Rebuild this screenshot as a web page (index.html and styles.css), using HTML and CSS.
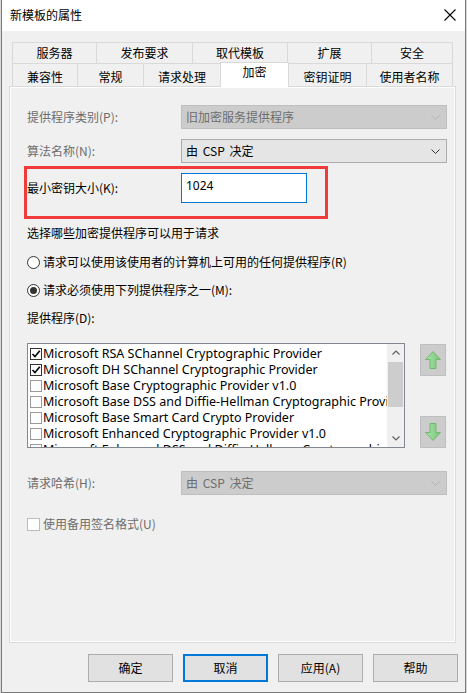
FILE: index.html
```html
<!DOCTYPE html>
<html lang="zh-CN">
<head>
<meta charset="utf-8">
<title>新模板的属性</title>
<link rel="stylesheet" href="styles.css">
</head>
<body>
<div class="window">
  <div class="titlebar">
    <span class="title">新模板的属性</span>
    <svg class="close" width="12" height="12" viewBox="0 0 12 12"><path d="M0.5 0.5 L11.5 11.5 M11.5 0.5 L0.5 11.5" stroke="#000" stroke-width="1.1" fill="none"/></svg>
  </div>
  <div class="client">
    <div class="tabs">
      <div class="tabrow r1">
        <div class="tab">服务器</div>
        <div class="tab">发布要求</div>
        <div class="tab">取代模板</div>
        <div class="tab">扩展</div>
        <div class="tab">安全</div>
      </div>
      <div class="tabrow r2">
        <div class="tab">兼容性</div>
        <div class="tab">常规</div>
        <div class="tab">请求处理</div>
        <div class="tab selected">加密</div>
        <div class="tab">密钥证明</div>
        <div class="tab">使用者名称</div>
      </div>
    </div>
    <div class="panel">
      <div class="row first">
        <span class="label disabled">提供程序类别(P):</span>
        <div class="combo disabled"><span>旧加密服务提供程序</span><svg class="chev" width="9" height="5" viewBox="0 0 9 5"><path d="M0.5 0.5 L4.5 4.5 L8.5 0.5" stroke="#b4b4b4" fill="none"/></svg></div>
      </div>
      <div class="row second">
        <span class="label disabled">算法名称(N):</span>
        <div class="combo"><span>由 CSP 决定</span><svg class="chev" width="9" height="5" viewBox="0 0 9 5"><path d="M0.5 0.5 L4.5 4.5 L8.5 0.5" stroke="#333" fill="none"/></svg></div>
      </div>
      <div class="highlight">
        <span class="label">最小密钥大小(K):</span>
        <div class="textbox">1024</div>
      </div>
      <div class="line text-choose">选择哪些加密提供程序可以用于请求</div>
      <div class="line radio-row r-any"><span class="radio"></span>请求可以使用该使用者的计算机上可用的任何提供程序(R)</div>
      <div class="line radio-row r-must"><span class="radio checked"></span>请求必须使用下列提供程序之一(M):</div>
      <div class="line text-prov">提供程序(D):</div>
      <div class="listarea">
        <div class="listbox">
          <div class="items">
            <div class="item"><span class="cb checked"><svg width="10" height="10" viewBox="0 0 10 10"><path d="M1.5 5 L4 7.5 L8.8 1.8" stroke="#000" stroke-width="1.6" fill="none"/></svg></span>Microsoft RSA SChannel Cryptographic Provider</div>
            <div class="item"><span class="cb checked"><svg width="10" height="10" viewBox="0 0 10 10"><path d="M1.5 5 L4 7.5 L8.8 1.8" stroke="#000" stroke-width="1.6" fill="none"/></svg></span>Microsoft DH SChannel Cryptographic Provider</div>
            <div class="item"><span class="cb"></span>Microsoft Base Cryptographic Provider v1.0</div>
            <div class="item"><span class="cb"></span>Microsoft Base DSS and Diffie-Hellman Cryptographic Provider</div>
            <div class="item"><span class="cb"></span>Microsoft Base Smart Card Crypto Provider</div>
            <div class="item"><span class="cb"></span>Microsoft Enhanced Cryptographic Provider v1.0</div>
            <div class="item"><span class="cb"></span>Microsoft Enhanced DSS and Diffie-Hellman Cryptographic Provider</div>
          </div>
          <div class="vscroll">
            <div class="sbtn"><svg width="8" height="5" viewBox="0 0 8 5"><path d="M0.5 4.5 L4 1 L7.5 4.5" stroke="#606060" stroke-width="1.2" fill="none"/></svg></div>
            <div class="thumb"></div>
            <div class="spacer"></div>
            <div class="sbtn"><svg width="8" height="5" viewBox="0 0 8 5"><path d="M0.5 0.5 L4 4 L7.5 0.5" stroke="#606060" stroke-width="1.2" fill="none"/></svg></div>
          </div>
        </div>
        <div class="movebtns">
          <div class="movebtn"><svg width="18" height="20" viewBox="0 0 18 20"><defs><linearGradient id="gu" x1="0" y1="0" x2="1" y2="0"><stop offset="0" stop-color="#a8e2a8"/><stop offset="1" stop-color="#7cc67c"/></linearGradient></defs><path d="M9 1.5 L16.5 9.5 L12 9.5 L12 18.5 L6 18.5 L6 9.5 L1.5 9.5 Z" fill="url(#gu)" stroke="#72b872" stroke-width="1"/></svg></div>
          <div class="movebtn"><svg width="18" height="20" viewBox="0 0 18 20"><defs><linearGradient id="gd" x1="0" y1="0" x2="1" y2="0"><stop offset="0" stop-color="#a8e2a8"/><stop offset="1" stop-color="#7cc67c"/></linearGradient></defs><path d="M9 18.5 L16.5 10.5 L12 10.5 L12 1.5 L6 1.5 L6 10.5 L1.5 10.5 Z" fill="url(#gd)" stroke="#72b872" stroke-width="1"/></svg></div>
        </div>
      </div>
      <div class="row hash">
        <span class="label disabled">请求哈希(H):</span>
        <div class="combo disabled"><span>由 CSP 决定</span><svg class="chev" width="9" height="5" viewBox="0 0 9 5"><path d="M0.5 0.5 L4.5 4.5 L8.5 0.5" stroke="#b4b4b4" fill="none"/></svg></div>
      </div>
      <div class="line check-row disabled"><span class="dcb"></span>使用备用签名格式(U)</div>
    </div>
    <div class="buttons">
      <div class="btn">确定</div>
      <div class="btn default">取消</div>
      <div class="btn">应用(A)</div>
      <div class="btn">帮助</div>
    </div>
  </div>
</div>
</body>
</html>
```
FILE: styles.css
```css
* { box-sizing: border-box; }
html, body { margin: 0; padding: 0; }
body {
  width: 467px;
  height: 693px;
  overflow: hidden;
  background: #d8d8d8;
  font-family: "Noto Sans CJK SC", "Noto Sans", sans-serif;
  font-size: 12px;
  color: #000;
}
.window {
  margin-left: 1px;
  width: 465px;
  height: 693px;
  border: 1px solid #7a7a7a;
  border-top: none;
  background: #f0f0f0;
  display: flex;
  flex-direction: column;
}
.titlebar {
  height: 31px;
  background: #fff;
  display: flex;
  align-items: center;
  padding-left: 8px;
  padding-right: 8px;
  flex: none;
}
.title { flex: 1; font-size: 12px; line-height: 16px; padding-bottom: 1px; }
.close { display: block; margin-right: 1px; margin-bottom: 2px; }
.client { display: flex; flex-direction: column; }
.tabs { margin-top: 11px; margin-left: 10px; width: 441px; }
.tabrow { display: grid; }
.r1 { grid-template-columns: 84px 96px 95px 84px 82px; height: 21px; }
.r2 { grid-template-columns: 65px 66px 77px 69px 77px 87px; height: 23px; }
.tab {
  border-top: 1px solid #d9d9d9;
  border-left: 1px solid #d9d9d9;
  background: #f0f0f0;
  display: flex;
  align-items: center;
  justify-content: center;
  line-height: 16px;
  white-space: nowrap;
}
.tabrow .tab:last-child { border-right: 1px solid #d9d9d9; }
.r2 .tab { padding-top: 2px; }
.r2 .tab.selected {
  position: relative;
  z-index: 2;
  background: #fff;
  margin-top: -1px;
  height: 25px;
  border-right: 1px solid #d9d9d9;
  padding-top: 0;
  padding-bottom: 6px;
}
.r2 .tab.selected + .tab { border-left: none; }
.panel {
  margin-left: 7px;
  width: 447px;
  height: 557px;
  border: 1px solid #dadada;
  box-shadow: inset 0 0 0 1px #fff;
  background: #f0f0f0;
  padding-left: 17px;
  display: flex;
  flex-direction: column;
  position: relative;
  z-index: 1;
}
.row { display: flex; align-items: center; height: 24px; }
.row.first { margin-top: 18px; }
.row.second { margin-top: 10px; }
.label { width: 154px; flex: none; line-height: 16px; white-space: nowrap; }
.disabled, .label.disabled { color: #6d6d6d; }
.combo {
  width: 266px;
  height: 24px;
  border: 1px solid #adadad;
  background: #e5e5e5;
  display: flex;
  align-items: center;
  padding-left: 4px;
  padding-right: 6px;
}
.combo span { flex: 1; line-height: 16px; word-spacing: 2px; }
.combo.disabled { background: #cccccc; border-color: #bfbfbf; color: #6d6d6d; }
.chev { display: block; }
.highlight {
  margin-top: 3px;
  margin-left: -3px;
  width: 304px;
  height: 53px;
  border: 3px solid #f03b3b;
  display: flex;
  align-items: flex-start;
}
.highlight .label { margin-top: 11px; }
.textbox {
  margin-top: 4px;
  width: 126px;
  height: 30px;
  border: 1px solid #0078d7;
  background: #fff;
  padding-left: 4px;
  padding-top: 4px;
  line-height: 16px;
  font-family: "Noto Sans", "Noto Sans CJK SC", sans-serif;
}
.line { line-height: 16px; height: 16px; display: flex; align-items: center; white-space: nowrap; }
.text-choose { margin-top: 6px; }
.r-any { margin-top: 13px; }
.r-must { margin-top: 12px; }
.text-prov { margin-top: 12px; }
.radio {
  width: 13px;
  height: 13px;
  border: 1px solid #333;
  border-radius: 50%;
  background: #fff;
  margin-right: 3px;
  flex: none;
  display: flex;
  align-items: center;
  justify-content: center;
}
.radio.checked::after {
  content: "";
  width: 7px;
  height: 7px;
  border-radius: 50%;
  background: #333;
}
.listarea { margin-top: 17px; display: flex; align-items: flex-start; }
.listbox {
  width: 378px;
  height: 105px;
  border: 1px solid #828790;
  background: #fff;
  display: flex;
  overflow: hidden;
  flex: none;
}
.items {
  flex: 1;
  overflow: hidden;
  padding-top: 2px;
  padding-left: 2px;
  font-family: "Noto Sans", "Noto Sans CJK SC", sans-serif;
  font-size: 12.5px;
}
.item { height: 16px; line-height: 16px; white-space: nowrap; display: flex; align-items: center; }
.cb {
  width: 12px;
  height: 12px;
  border: 1px solid #9a9a9a;
  background: #fff;
  margin-right: 1px;
  flex: none;
  display: flex;
  align-items: center;
  justify-content: center;
}
.cb.checked { border-color: #333; }
.cb svg { display: block; }
.vscroll {
  width: 17px;
  flex: none;
  background: #f0f0f0;
  display: flex;
  flex-direction: column;
  align-items: center;
}
.sbtn { height: 17px; width: 17px; display: flex; align-items: center; justify-content: center; }
.thumb { margin-top: 1px; width: 15px; height: 45px; background: #cdcdcd; }
.spacer { flex: 1; }
.movebtns { margin-left: 15px; display: flex; flex-direction: column; gap: 40px; margin-top: 1px; }
.movebtn {
  width: 26px;
  height: 32px;
  background: #cccccc;
  border: 1px solid #bfbfbf;
  display: flex;
  align-items: center;
  justify-content: center;
}
.movebtn svg { display: block; }
.row.hash { margin-top: 23px; }
.check-row { margin-top: 21px; }
.dcb {
  width: 13px;
  height: 13px;
  border: 1px solid #bcbcbc;
  background: #fff;
  margin-right: 3px;
  flex: none;
}
.buttons {
  margin-top: 11px;
  padding-left: 86px;
  display: flex;
  gap: 10px;
}
.btn {
  width: 85px;
  height: 28px;
  border: 1px solid #adadad;
  background: #e1e1e1;
  display: flex;
  align-items: center;
  justify-content: center;
  line-height: 16px;
}
.btn.default { border: 2px solid #0078d7; }
```
